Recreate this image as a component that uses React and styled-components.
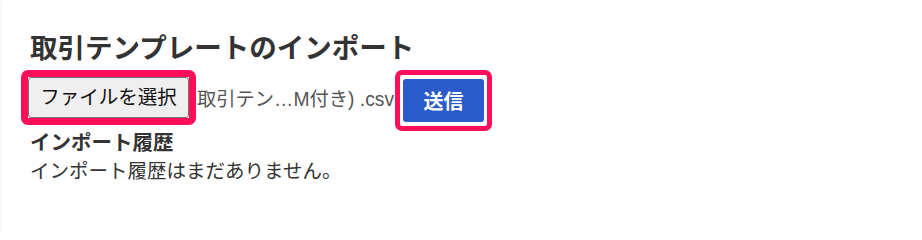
import React from "react";
import styled, { createGlobalStyle } from "styled-components";

const GlobalStyle = createGlobalStyle`
  html, body {
    margin: 0;
    padding: 0;
    background: #fff;
  }
  body {
    font-family: "Liberation Sans", "Noto Sans CJK JP", sans-serif;
    color: #333;
  }
`;

const Page = styled.div`
  width: 922px;
  height: 233px;
  box-sizing: border-box;
  padding: 30px 30px 0 30px;
  background: #fff;
  box-shadow: inset 3px 0 3px -2px rgba(0, 0, 0, 0.06);
`;

const Title = styled.h2`
  margin: 0;
  font-size: 27.5px;
  line-height: 37px;
  font-weight: 700;
  color: #333;
`;

const UploadRow = styled.div`
  display: flex;
  align-items: flex-start;
  margin-top: 3px;
  margin-left: -9px;
  height: 61px;
`;

const Highlight = styled.div`
  display: flex;
  align-items: center;
  border: ${(p) => p.$w}px solid #ff0f5a;
  border-radius: 7px;
  padding: ${(p) => p.$pad};
  background: #fff;
`;

const FileButton = styled.button`
  font-family: inherit;
  font-size: 19.5px;
  line-height: 1;
  color: #111;
  background: #efefef;
  border: 1px solid #767676;
  border-radius: 3px;
  width: 161px;
  height: 41px;
  padding: 0;
  box-sizing: border-box;
`;

const FileName = styled.span`
  font-size: 19.3px;
  line-height: 60px;
  color: #555;
  white-space: nowrap;
  margin-left: 1px;
  margin-right: 1px;
`;

const SendButton = styled.button`
  font-family: inherit;
  font-size: 20px;
  font-weight: 700;
  color: #fff;
  background: #2a5bc9;
  border: none;
  border-radius: 3px;
  width: 81px;
  height: 43px;
`;

const SubTitle = styled.h3`
  margin: 0;
  font-size: 20.5px;
  line-height: 24px;
  font-weight: 700;
  color: #333;
`;

const Empty = styled.p`
  margin: 0;
  font-size: 19.5px;
  line-height: 32px;
  color: #333;
`;

export default function App() {
  return (
    <>
      <GlobalStyle />
      <Page>
        <Title>取引テンプレートのインポート</Title>
        <UploadRow>
          <Highlight $w={7} $pad="0">
            <FileButton>ファイルを選択</FileButton>
          </Highlight>
          <FileName>取引テン…M付き) .csv</FileName>
          <Highlight $w={5} $pad="4px 3px">
            <SendButton>送信</SendButton>
          </Highlight>
        </UploadRow>
        <SubTitle>インポート履歴</SubTitle>
        <Empty>インポート履歴はまだありません。</Empty>
      </Page>
    </>
  );
}
